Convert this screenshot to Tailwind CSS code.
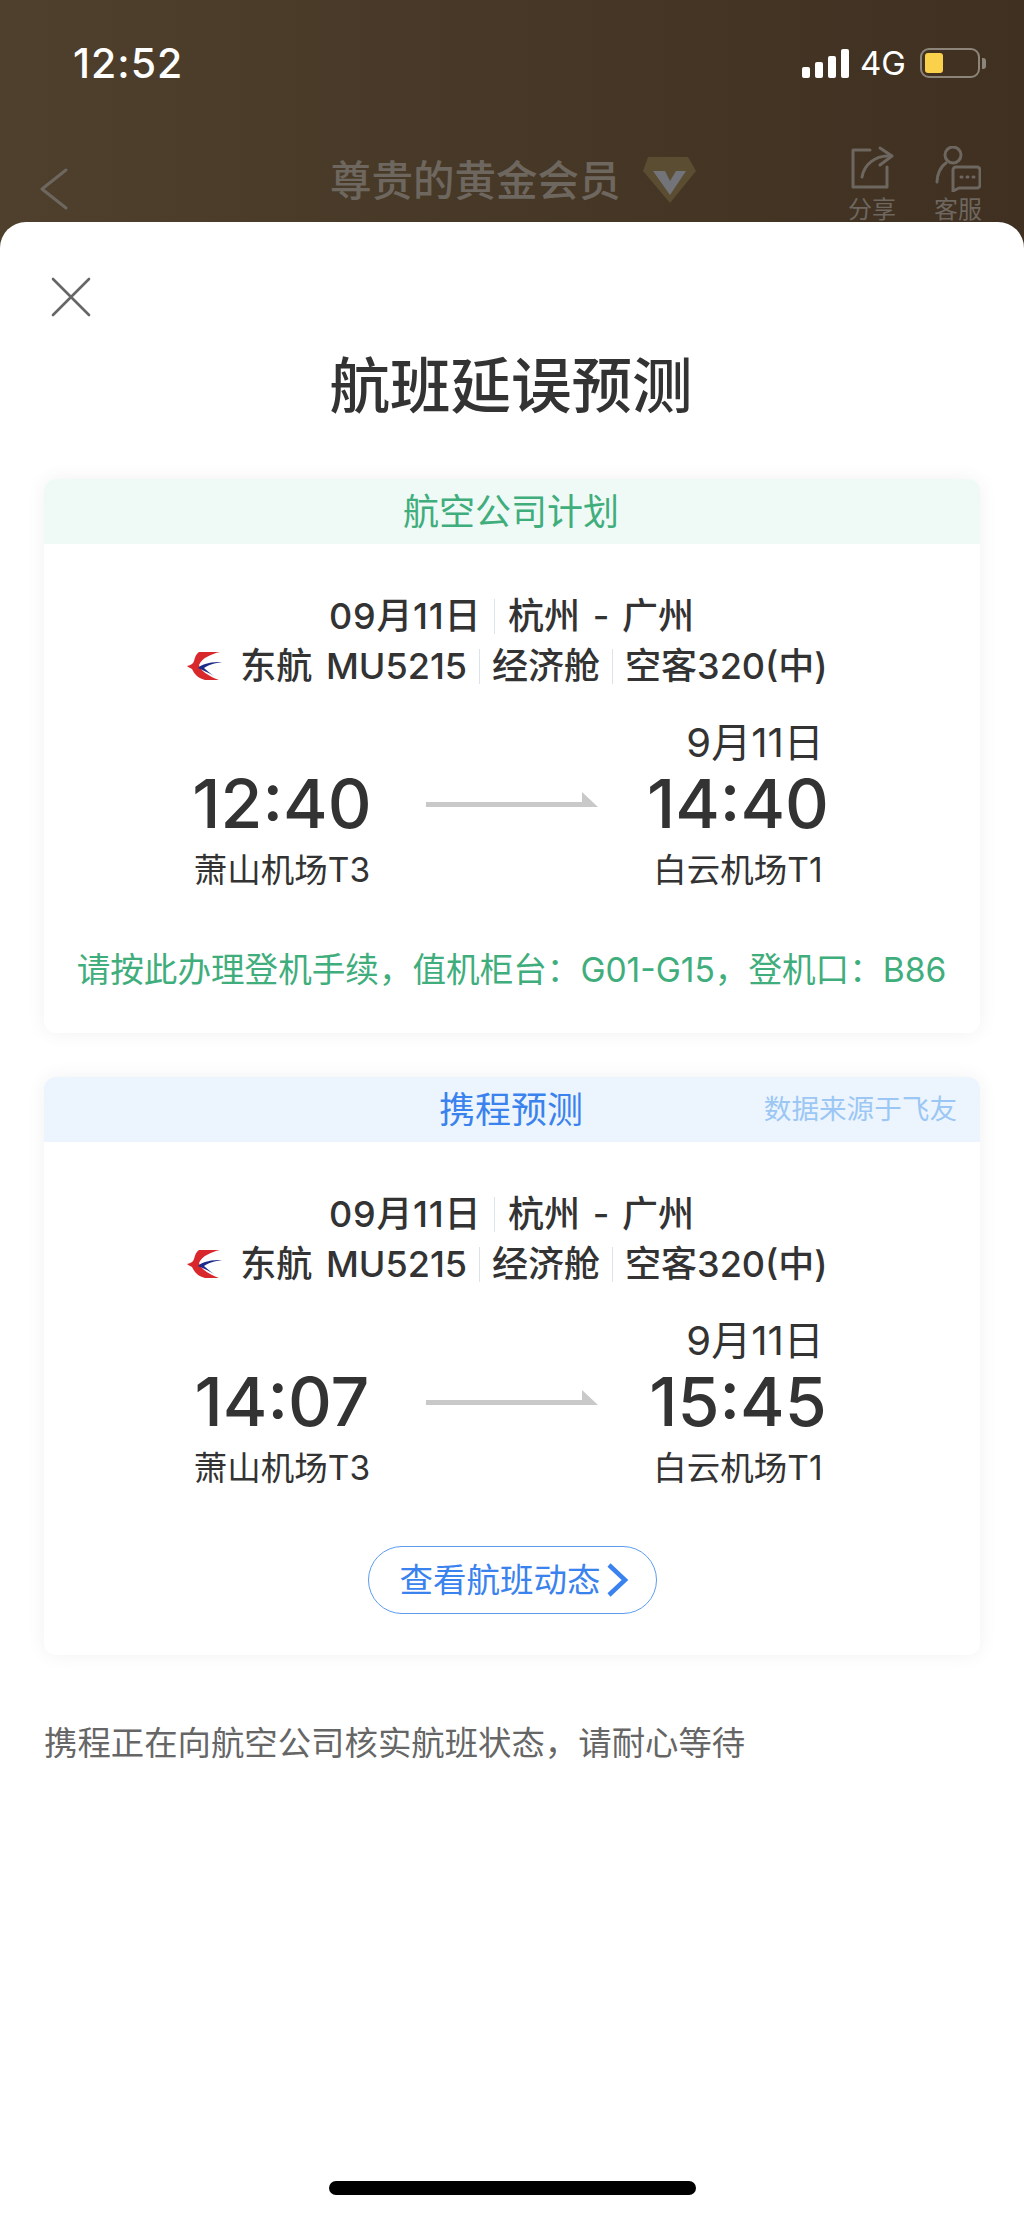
<!DOCTYPE html>
<html lang="zh-CN">
<head>
  <meta charset="UTF-8" />
  <meta name="viewport" content="width=device-width, initial-scale=1.0"/>
  <title>航班延误预测</title>
  <script src="https://cdn.jsdelivr.net/npm/@tailwindcss/browser@4"></script>
</head>
<body class="bg-white font-['Inter','Noto_Sans_CJK_SC',sans-serif]">
<div class="w-[1024px] h-[2217px] overflow-hidden flex flex-col bg-white">

  <!-- Header behind the sheet -->
  <div class="h-[248px] shrink-0 overflow-hidden bg-linear-to-r from-[#4e402c] to-[#3f3021]">
    <!-- Status bar -->
    <div class="flex items-center justify-between h-[46px] mt-[40px] pl-[73px] pr-[38px]">
      <span class="text-[41px] leading-[46px] font-medium tracking-[1px] text-white">12:52</span>
      <div class="flex items-center">
        <div class="flex items-end gap-[5px] h-[29px]">
          <div class="w-[8px] h-[11px] bg-white rounded-[2px]"></div>
          <div class="w-[8px] h-[16px] bg-white rounded-[2px]"></div>
          <div class="w-[8px] h-[22px] bg-white rounded-[2px]"></div>
          <div class="w-[8px] h-[29px] bg-white rounded-[2px]"></div>
        </div>
        <span class="ml-[11px] text-[33px] leading-[40px] text-white">4G</span>
        <div class="ml-[14px] w-[60px] h-[30px] p-[3px] rounded-[9px] border-[2.5px] border-[#8d8579]">
          <div class="w-[18px] h-full rounded-[3px] bg-[#fbd04a]"></div>
        </div>
        <div class="ml-[2px] w-[4px] h-[11px] rounded-r-[3px] bg-[#8d8579]"></div>
      </div>
    </div>
    <!-- Nav bar, dimmed by the overlay -->
    <div class="flex items-start mt-[60px] pl-[40px]">
      <svg class="mt-[22px] shrink-0" width="28" height="42" viewBox="0 0 28 42" fill="none" stroke="#6d675f" stroke-width="3" stroke-linecap="round" stroke-linejoin="round"><path d="M26 2 2 21l24 19"/></svg>
      <span class="ml-[262px] mt-[12px] w-[287px] text-[41.5px] leading-[46px] font-medium text-[#6d675f] whitespace-nowrap">尊贵的黄金会员</span>
      <svg class="ml-[26px] mt-[11px] shrink-0" width="53" height="46" viewBox="0 0 53 46"><path d="M5 0h40l8 14-26 32L0 14z" fill="#5b4d31"/><path d="M10 14h12l5 10 6-10h10L27 38z" fill="#72747a"/></svg>
      <div class="ml-[152px] w-[48px] flex flex-col items-center shrink-0">
        <svg width="44" height="44" viewBox="0 0 44 44" fill="none" stroke="#6d675f" stroke-width="3" stroke-linecap="round" stroke-linejoin="round"><path d="M20 4H3v37h34V21"/><path d="M12 31C14 19 25 9 40 10"/><path d="M30 2l12 8-12 9"/></svg>
        <span class="mt-[6px] text-[24px] leading-[28px] text-[#6d675f] whitespace-nowrap">分享</span>
      </div>
      <div class="ml-[38px] w-[48px] flex flex-col items-center shrink-0">
        <svg width="46" height="46" viewBox="0 0 46 46" fill="none" stroke="#6d675f" stroke-width="3" stroke-linecap="round" stroke-linejoin="round"><circle cx="18" cy="9" r="8"/><path d="M11 17C5 21 2 29 2 36"/><path d="M22 21h20a3 3 0 0 1 3 3v15a3 3 0 0 1-3 3H24l-6 3V24a3 3 0 0 1 3-3z"/><path d="M26 31h1M32 31h1M38 31h1"/></svg>
        <span class="mt-[4px] text-[24px] leading-[28px] text-[#6d675f] whitespace-nowrap">客服</span>
      </div>
    </div>
  </div>

  <!-- Sheet -->
  <div class="relative -mt-[26px] flex-1 bg-white rounded-t-[26px] px-[44px] flex flex-col">
    <svg class="mt-[55px] ml-[7px] shrink-0" width="40" height="40" viewBox="0 0 40 40" stroke="#666" stroke-width="2.6" stroke-linecap="round"><path d="M2 2l36 36M38 2 2 38"/></svg>
    <h1 class="mt-[34px] h-[70px] pr-[2px] text-center text-[60.5px] leading-[70px] font-medium text-[#333]">航班延误预测</h1>

    <!-- Airline plan -->
    <div class="mt-[58px] rounded-[12px] bg-white shadow-[0_0_20px_rgba(0,0,0,0.06)] overflow-hidden">
      <div class="h-[65px] pr-[2px] flex items-center justify-center bg-[#eff9f6] text-[36px] text-[#3fae7c]">航空公司计划</div>
      <div class="pt-[47px] pb-[39px]">
        <div class="flex items-center justify-center h-[50px] pr-[1px] text-[36px] font-medium text-[#333]">
          <span class="tracking-[0.7px]">09月11日</span><i class="mx-[13px] w-[1px] h-[35px] bg-[#dde3ea]"></i><span class="[word-spacing:3px]">杭州 - 广州</span>
        </div>
        <div class="flex items-center justify-center h-[50px] pr-[9px] text-[36px] font-medium text-[#333]">
          <svg class="mr-[17px]" width="36" height="28" viewBox="0 0 36 28"><path d="M12 0H33C24 2 15 6 12 13C13 18 21 24 32 28H18C10 26 7 21 5 17C3 16 1 15 0 14C4 13 6 12 7 9C8 5 9 2 12 0z" fill="#d8282c"/><path d="M35 10C25 10 16 11 11 16C16 18 22 21 27 24C23 21 20 19 17 16C21 13 28 11 35 10z" fill="#1c2a8a"/></svg>
          <span class="[word-spacing:4px]">东航 MU5215</span><i class="mx-[12px] w-[1px] h-[35px] bg-[#dde3ea]"></i><span>经济舱</span><i class="mx-[12px] w-[1px] h-[35px] bg-[#dde3ea]"></i><span>空客320(中)</span>
        </div>
        <div class="flex mt-[29px] pl-[108px]">
          <div class="w-[260px] pt-[45px] flex flex-col items-center text-[#333]">
            <span class="text-[68px] leading-[76px] font-medium">12:40</span>
            <span class="mt-[5px] text-[33.5px] leading-[48px]">萧山机场T3</span>
          </div>
          <div class="ml-[14px] w-[172px] pt-[72px] shrink-0">
            <svg width="172" height="16" viewBox="0 0 172 16"><path d="M0 10h156V0l16 15H0z" fill="#c9c9c9"/></svg>
          </div>
          <div class="ml-[10px] w-[260px] flex flex-col items-center text-[#333]">
            <span class="ml-[34px] text-[40px] leading-[45px]">9月11日</span>
            <span class="text-[68px] leading-[76px] font-medium">14:40</span>
            <span class="mt-[5px] text-[33.5px] leading-[48px]">白云机场T1</span>
          </div>
        </div>
        <p class="mt-[52px] pr-[1px] text-center text-[33.6px] leading-[48px] text-[#3fae7c] whitespace-nowrap">请按此办理登机手续，值机柜台：G01-G15，登机口：B86</p>
      </div>
    </div>

    <!-- Ctrip forecast -->
    <div class="mt-[44px] rounded-[12px] bg-white shadow-[0_0_20px_rgba(0,0,0,0.06)] overflow-hidden">
      <div class="relative h-[65px] pr-[2px] flex items-center justify-center bg-[#ecf5fd] text-[36px] text-[#3a82ee]">
        携程预测
        <span class="absolute right-[23px] text-[27.6px] text-[#9cc7f5]">数据来源于飞友</span>
      </div>
      <div class="pt-[47px] pb-[41px]">
        <div class="flex items-center justify-center h-[50px] pr-[1px] text-[36px] font-medium text-[#333]">
          <span class="tracking-[0.7px]">09月11日</span><i class="mx-[13px] w-[1px] h-[35px] bg-[#dde3ea]"></i><span class="[word-spacing:3px]">杭州 - 广州</span>
        </div>
        <div class="flex items-center justify-center h-[50px] pr-[9px] text-[36px] font-medium text-[#333]">
          <svg class="mr-[17px]" width="36" height="28" viewBox="0 0 36 28"><path d="M12 0H33C24 2 15 6 12 13C13 18 21 24 32 28H18C10 26 7 21 5 17C3 16 1 15 0 14C4 13 6 12 7 9C8 5 9 2 12 0z" fill="#d8282c"/><path d="M35 10C25 10 16 11 11 16C16 18 22 21 27 24C23 21 20 19 17 16C21 13 28 11 35 10z" fill="#1c2a8a"/></svg>
          <span class="[word-spacing:4px]">东航 MU5215</span><i class="mx-[12px] w-[1px] h-[35px] bg-[#dde3ea]"></i><span>经济舱</span><i class="mx-[12px] w-[1px] h-[35px] bg-[#dde3ea]"></i><span>空客320(中)</span>
        </div>
        <div class="flex mt-[29px] pl-[108px]">
          <div class="w-[260px] pt-[45px] flex flex-col items-center text-[#333]">
            <span class="text-[68px] leading-[76px] font-medium">14:07</span>
            <span class="mt-[5px] text-[33.5px] leading-[48px]">萧山机场T3</span>
          </div>
          <div class="ml-[14px] w-[172px] pt-[72px] shrink-0">
            <svg width="172" height="16" viewBox="0 0 172 16"><path d="M0 10h156V0l16 15H0z" fill="#c9c9c9"/></svg>
          </div>
          <div class="ml-[10px] w-[260px] flex flex-col items-center text-[#333]">
            <span class="ml-[34px] text-[40px] leading-[45px]">9月11日</span>
            <span class="text-[68px] leading-[76px] font-medium">15:45</span>
            <span class="mt-[5px] text-[33.5px] leading-[48px]">白云机场T1</span>
          </div>
        </div>
        <div class="mt-[54px] ml-[324px] w-[289px] h-[68px] pl-[3px] rounded-full border-[1.5px] border-[#5b9cf0] flex items-center justify-center text-[33.5px] text-[#3a82ee]">
          查看航班动态
          <svg class="ml-[6px]" width="22" height="34" viewBox="0 0 22 34" fill="none" stroke="#3a82ee" stroke-width="4.5"><path d="M2 2l16 15L2 32"/></svg>
        </div>
      </div>
    </div>

    <p class="mt-[64px] text-[33.4px] leading-[48px] text-[#666] whitespace-nowrap">携程正在向航空公司核实航班状态，请耐心等待</p>

    <div class="absolute left-[329px] top-[1959px] w-[367px] h-[14px] rounded-full bg-black"></div>
  </div>
</div>
</body>
</html>
